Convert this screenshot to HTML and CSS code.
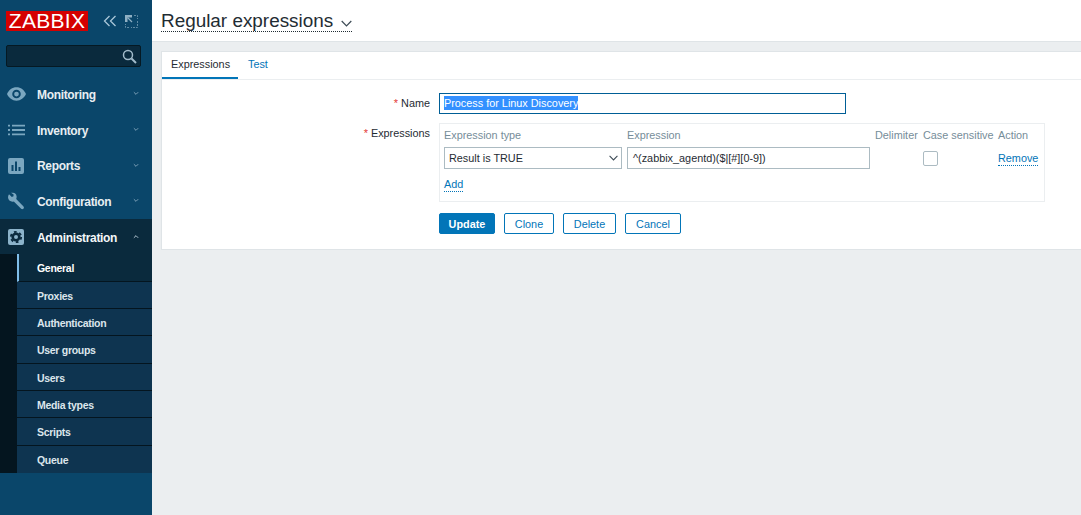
FILE: index.html
```html
<!DOCTYPE html>
<html lang="en">
<head>
<meta charset="utf-8">
<title>Regular expressions</title>
<link rel="stylesheet" href="styles.css">
</head>
<body>
<div class="app">
  <aside class="sidebar">
    <div class="brand">
      <div class="logo">ZABBIX</div>
      <svg class="tool" width="14" height="12" viewBox="0 0 14 12"><path d="M6.500 1 1.500 6l5 5M12.500 1l-5 5 5 5" fill="none" stroke="#a9c6d8" stroke-width="1.300"/></svg>
      <svg class="tool tool-b" width="13" height="13" viewBox="0 0 13 13"><path d="M0 0H7V2.500H2.500V7H0z" fill="#8fb0c4"/><path d="M2.500 2.500l4.500 4.500" stroke="#8fb0c4" stroke-width="1.300"/><path d="M9 .500h3.500V4M12.500 6v6.500H6M4 12.500H.500V9" fill="none" stroke="#5f8aa4" stroke-width="1" stroke-dasharray="2 1"/></svg>
    </div>
    <div class="search">
      <svg width="15" height="15" viewBox="0 0 15 15"><circle cx="6" cy="6" r="4.500" fill="none" stroke="#a3bccb" stroke-width="1.500"/><path d="m9.500 9.500 4.500 4.500" stroke="#a3bccb" stroke-width="2"/></svg>
    </div>
    <nav class="menu">
      <a class="item">
        <svg class="ico ico-eye" width="19" height="14" viewBox="0 0 20 14"><path fill-rule="evenodd" d="M10 0C5.500 0 2 2.800 0 7c2 4.200 5.500 7 10 7s8-2.800 10-7c-2-4.200-5.500-7-10-7zm0 11.500a4.500 4.500 0 1 1 0-9 4.500 4.500 0 0 1 0 9zM10 4.500a2.500 2.500 0 1 0 0 5 2.500 2.500 0 0 0 0-5z" fill="#7ba7c0"/></svg>
        <span class="label">Monitoring</span><svg class="chev" width="6" height="5" viewBox="0 0 7 5"><path d="m1 1 2.500 2.500L6 1" fill="none" stroke="#8fb0c4"/></svg>
      </a>
      <a class="item">
        <svg class="ico" width="17" height="11" viewBox="0 0 17 11"><path d="M0 0h2v2H0zM4 0h13v2H4zM0 4.500h2v2H0zM4 4.500h13v2H4zM0 9h2v2H0zM4 9h13v2H4z" fill="#7ba7c0"/></svg>
        <span class="label">Inventory</span><svg class="chev" width="6" height="5" viewBox="0 0 7 5"><path d="m1 1 2.500 2.500L6 1" fill="none" stroke="#8fb0c4"/></svg>
      </a>
      <a class="item">
        <svg class="ico" width="16" height="16" viewBox="0 0 16 16"><rect width="16" height="16" rx="2" fill="#7ba7c0"/><path d="M3.500 7h2v6h-2zM7 3.500h2V13H7zM10.500 9h2v4h-2z" fill="#0a466a"/></svg>
        <span class="label">Reports</span><svg class="chev" width="6" height="5" viewBox="0 0 7 5"><path d="m1 1 2.500 2.500L6 1" fill="none" stroke="#8fb0c4"/></svg>
      </a>
      <a class="item">
        <svg class="ico" width="16" height="17" viewBox="0 0 16 17"><path d="M1 1.800 3.800 4.500 5.500 3.800 5.600 2 3 .300C5.500-.400 8.300 1 8.600 3.800c.1 1-.1 1.900-.4 2.700l7.100 7.200c.9 1 .8 1.800.1 2.500-.8.700-1.700.7-2.500-.1L5.800 9C3 9.800 0 7.800 0 4.800c0-1.100.4-2.200 1-3z" fill="#7ba7c0"/></svg>
        <span class="label">Configuration</span><svg class="chev" width="6" height="5" viewBox="0 0 7 5"><path d="m1 1 2.500 2.500L6 1" fill="none" stroke="#8fb0c4"/></svg>
      </a>
      <div class="group">
        <a class="item item-open">
          <svg class="ico" width="16" height="16" viewBox="0 0 16 16"><rect width="16" height="16" rx="2" fill="#8cb3ca"/><circle cx="8" cy="8" r="3.300" fill="none" stroke="#0b2a3e" stroke-width="2.600"/><circle cx="8" cy="8" r="5.200" fill="none" stroke="#0b2a3e" stroke-width="1.800" stroke-dasharray="2.700 2.750"/></svg>
          <span class="label">Administration</span><svg class="chev" width="6" height="5" viewBox="0 0 7 5"><path d="m1 4 2.500-2.500L6 4" fill="none" stroke="#cfe0ea"/></svg>
        </a>
        <ul class="sub">
          <li class="sub-item active">General</li>
          <li class="sub-item">Proxies</li>
          <li class="sub-item">Authentication</li>
          <li class="sub-item">User groups</li>
          <li class="sub-item">Users</li>
          <li class="sub-item">Media types</li>
          <li class="sub-item">Scripts</li>
          <li class="sub-item">Queue</li>
        </ul>
      </div>
    </nav>
  </aside>
  <main class="main">
    <header class="page-head">
      <h1 class="title">Regular expressions <svg class="title-chev" width="11" height="7" viewBox="0 0 11 7"><path d="m.700 1 4.800 4.800L10.300 1" fill="none" stroke="#3c4a55" stroke-width="1.200"/></svg></h1>
    </header>
    <section class="panel">
      <div class="tabs">
        <span class="tab tab-on">Expressions</span>
        <span class="tab tab-link">Test</span>
      </div>
      <form class="form">
        <div class="row row-name">
          <div class="lab"><i>*</i> Name</div>
          <div class="name-input"><span class="sel">Process for Linux Discovery</span></div>
        </div>
        <div class="row row-expr">
          <div class="lab"><i>*</i> Expressions</div>
          <div class="expr-box">
            <div class="cols heads">
              <span>Expression type</span><span>Expression</span><span>Delimiter</span><span>Case sensitive</span><span>Action</span>
            </div>
            <div class="cols vals">
              <div class="select">Result is TRUE<svg width="9" height="6" viewBox="0 0 11 7"><path d="m.700 1 4.800 4.800L10.300 1" fill="none" stroke="#3c4a55" stroke-width="1.300"/></svg></div>
              <div class="text-input">^(zabbix_agentd)($|[#][0-9])</div>
              <div></div>
              <div class="check"></div>
              <a class="dot-link">Remove</a>
            </div>
            <a class="dot-link add">Add</a>
          </div>
        </div>
        <div class="actions">
          <button type="button" class="btn btn-primary">Update</button>
          <button type="button" class="btn btn-clone">Clone</button>
          <button type="button" class="btn btn-delete">Delete</button>
          <button type="button" class="btn btn-cancel">Cancel</button>
        </div>
      </form>
    </section>
  </main>
</div>
</body>
</html>
```

FILE: styles.css
```css
* { box-sizing: border-box; }
html, body { margin: 0; height: 100%; overflow: hidden; }
body { font-family: "Liberation Sans", Arial, sans-serif; font-size: 10.85px; color: #1f2c33; background: #ebeef0; }
.app { display: flex; width: 1081px; height: 515px; }

.sidebar { width: 152px; flex: none; background: #0a466a; color: #f2f2f2; }
.brand { display: flex; align-items: center; height: 45px; padding: 11px 0 14px 6px; }
.logo { width: 82px; height: 20px; background: #d40000; color: #fff; font-size: 21px; line-height: 20px; text-align: center; letter-spacing: .3px; }
.tool { margin-left: 15px; }
.tool-b { margin-left: 8px; }
.search { display: flex; align-items: center; justify-content: flex-end; width: 135px; height: 22px; margin-left: 6px; padding-right: 3px; background: #0a2a3d; border: 1px solid #051923; border-radius: 2px; }
.menu { margin-top: 9px; }
.item { display: flex; align-items: center; height: 35.700px; position: relative; padding-left: 37px; font-size: 12px; font-weight: 700; letter-spacing: -.33px; }
.ico { position: absolute; left: 8px; top: calc(50% + .5px); transform: translateY(-50%); }
.ico-eye { left: 7px; }
.label { flex: 1; padding-top: 2px; color: #e8eef2; }
.chev { margin-right: 13px; }
.group { background: #0a2a3d; }
.item-open .label { color: #f4f7f9; }
.sub { list-style: none; margin: 0; padding: 0 0 0 17px; background: #04151f; }
.sub-item { height: 27.300px; line-height: 28.800px; padding-left: 20px; background: #0e3450; border-bottom: 1px solid #04151f; font-size: 10.500px; font-weight: 700; letter-spacing: -.3px; color: #dce6ec; }
.sub-item:last-child { border-bottom: 0; }
.active { background: #0a2a3d; border-left: 2px solid #7fbde8; padding-left: 18px; color: #fff; }

.main { flex: 1; min-width: 0; }
.page-head { height: 42px; padding: 11px 0 0 9px; background: #fff; border-bottom: 1px solid #dfe4e7; }
.title { display: inline-block; margin: 0; height: 21px; font-size: 18.900px; font-weight: 400; line-height: 20px; color: #1f2c33; border-bottom: 1px dotted #1f2c33; }
.title-chev { margin-left: 3px; }
.panel { margin: 9px 0 0 9px; height: 199px; background: #fff; border: 1px solid #dfe4e7; border-right: 0; }
.tabs { display: flex; height: 28px; border-bottom: 1px solid #ebeef0; }
.tab { height: 27px; padding: 5px 9px 0; line-height: 14px; }
.tab-on { width: 76px; padding-right: 0; border-bottom: 2px solid #0275b8; color: #1f2c33; }
.tab-link { color: #0275b8; padding-left: 10px; }
.form { padding-top: 13px; }
.row { display: flex; }
.lab { width: 277px; flex: none; text-align: right; padding-right: 9px; color: #1f2c33; }
.lab i { color: #e33734; font-style: normal; }
.row-name { height: 21px; }
.row-name .lab { line-height: 21px; }
.name-input { width: 407px; height: 21px; border: 1px solid #005e96; padding: 0 4px; line-height: 19px; }
.sel { display: inline-block; height: 14px; line-height: 14px; background: #3390ff; color: #fff; }
.row-expr { margin-top: 9px; }
.row-expr .lab { line-height: 20px; }
.expr-box { width: 606px; height: 79px; padding: 3px 4px 0; border: 1px solid #ebeef0; }
.cols { display: grid; grid-template-columns: 178px 243px 43px 70px auto; column-gap: 5px; }
.heads { height: 20px; line-height: 16px; color: #768d99; white-space: nowrap; }
.vals { align-items: center; height: 22px; }
.vals .dot-link { margin-top: 1px; }
.select { display: flex; align-items: center; justify-content: space-between; height: 22px; padding: 0 3px 0 4px; border: 1px solid #acbbc2; }
.text-input { height: 22px; line-height: 20px; padding: 0 5px; border: 1px solid #acbbc2; color: #1f2c33; }
.check { width: 15px; height: 15px; border: 1px solid #acbbc2; border-radius: 2px; }
.dot-link { justify-self: start; color: #0275b8; border-bottom: 1px dotted #0275b8; line-height: 13px; }
.add { display: inline-block; margin-top: 9px; }
.actions { display: flex; gap: 9px; margin: 11px 0 0 277px; }
.btn { height: 21px; padding: 0; font: 10.850px "Liberation Sans", Arial, sans-serif; color: #0275b8; background: #fff; border: 1px solid #0275b8; border-radius: 2px; }
.btn-primary { width: 56px; font-weight: 700; color: #fff; background: #0275b8; }
.btn-clone { width: 50px; }
.btn-delete { width: 53px; }
.btn-cancel { width: 56px; }
```
